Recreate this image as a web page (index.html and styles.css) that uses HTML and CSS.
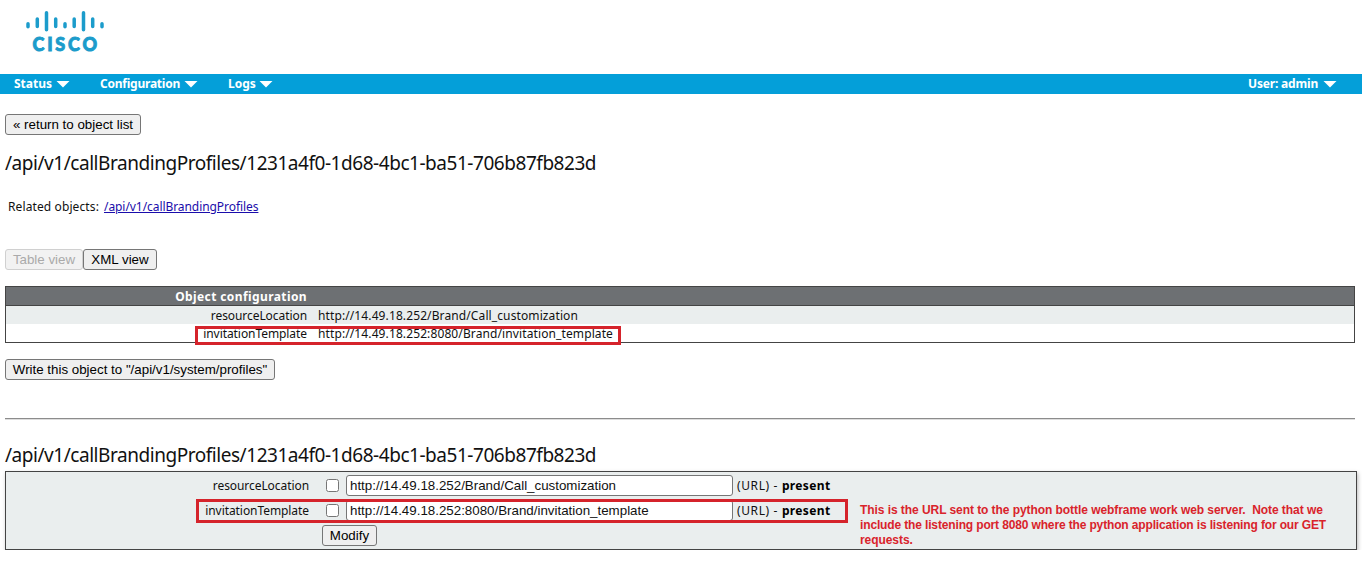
FILE: index.html
```html
<!DOCTYPE html>
<html lang="en">
<head>
<meta charset="utf-8">
<title>/api/v1/callBrandingProfiles</title>
<link rel="stylesheet" href="styles.css">
</head>
<body>
<header class="header">
  <svg class="logo" width="84" height="44" viewBox="24 10 84 44" role="img" aria-label="Cisco">
    <g stroke="#1c9ccb" stroke-width="3.5" stroke-linecap="round">
      <path d="M28 23.8v3M37.3 19v7.5M46.5 12.8v17M55.7 19v7.5M65 23.8v3M74.2 19v7.5M83.5 12.8v17M92.7 19v7.5M102 23.8v3"/>
    </g>
    <text class="logo-text" x="32.5" y="51" textLength="64.5" lengthAdjust="spacing">CISCO</text>
  </svg>
</header>
<nav class="nav">
  <a class="nav-item nav-status">Status<i class="caret"></i></a>
  <a class="nav-item nav-config">Configuration<i class="caret"></i></a>
  <a class="nav-item nav-logs">Logs<i class="caret"></i></a>
  <a class="nav-item nav-user">User: admin<i class="caret"></i></a>
</nav>
<main class="main">
  <button class="btn btn-return">« return to object list</button>
  <h1 class="title">/api/v1/callBrandingProfiles/1231a4f0-1d68-4bc1-ba51-706b87fb823d</h1>
  <p class="related"><span class="related-label">Related objects:</span><a class="link" href="#">/api/v1/callBrandingProfiles</a></p>
  <div class="views">
    <button class="btn btn-table" disabled>Table view</button>
    <button class="btn btn-xml">XML view</button>
  </div>
  <section class="config">
    <div class="config-head">Object configuration</div>
    <div class="config-row config-row-alt"><span class="name">resourceLocation</span><span class="value">http://14.49.18.252/Brand/Call_customization</span></div>
    <div class="config-row config-marked"><span class="name">invitationTemplate</span><span class="value">http://14.49.18.252:8080/Brand/invitation_template</span></div>
  </section>
  <button class="btn btn-write">Write this object to "/api/v1/system/profiles"</button>
  <hr class="rule">
  <h2 class="title title-form">/api/v1/callBrandingProfiles/1231a4f0-1d68-4bc1-ba51-706b87fb823d</h2>
  <form class="form">
    <div class="fields">
      <div class="field"><label class="name">resourceLocation</label><input class="check" type="checkbox"><input class="text" type="text" value="http://14.49.18.252/Brand/Call_customization"><span class="kind">(URL) -</span><b class="state">present</b></div>
      <div class="field field-marked"><label class="name">invitationTemplate</label><input class="check" type="checkbox"><input class="text" type="text" value="http://14.49.18.252:8080/Brand/invitation_template"><span class="kind">(URL) -</span><b class="state">present</b></div>
      <button class="btn btn-modify" type="button">Modify</button>
    </div>
    <p class="note">This is the URL sent to the python bottle webframe work web server.&nbsp; Note that we<br><span class="note-tight">include the listening port 8080 where the python application is listening for our GET</span><br>requests.</p>
  </form>
</main>
</body>
</html>
```
FILE: styles.css
```css
*, *::after { box-sizing: border-box; }
body { margin: 0; background: #fff; color: #111; font: 12px/16px "Noto Sans", sans-serif; overflow: hidden; }

.header { height: 74px; padding: 10px 24px; }
.logo { display: block; }
.logo-text { font: 900 18px Lato, sans-serif; fill: #1c9ccb; stroke: #1c9ccb; stroke-width: 0.9px; }

.nav { display: flex; align-items: center; height: 20px; padding: 0 26px 0 14px; background: #049fd9; color: #fff; font-weight: bold; }
.nav-item { display: flex; align-items: center; justify-content: space-between; }
.nav-status { width: 55px; }
.nav-config { width: 97px; margin-left: 31px; letter-spacing: -0.23px; }
.nav-logs { width: 44px; margin-left: 31px; }
.nav-user { width: 88px; margin-left: auto; letter-spacing: -0.18px; }
.caret { width: 14px; height: 7px; margin-right: -1px; background: #fff; clip-path: polygon(0 0, 100% 0, 50% 100%); }

.main { display: flex; flex-direction: column; align-items: flex-start; padding: 20px 5px 0; }
.btn { height: 21px; padding: 0; border: 1px solid #767676; border-radius: 3px; background: #efefef; color: #000; font: 13.333px/18px "Liberation Sans", sans-serif; white-space: nowrap; }
.btn:disabled { border-color: #d0d0d0; background: #f2f2f2; color: #aaa; }
.btn-return { width: 136px; }
.btn-table { width: 78px; }
.btn-xml { width: 74px; }
.btn-write { width: 270px; margin-top: 16px; }
.btn-modify { width: 55px; margin: 4px 0 0 316px; }

.title { margin: 16px 0 0; font-size: 19px; line-height: 24px; font-weight: normal; letter-spacing: -0.457px; white-space: nowrap; }
.title-form { margin-top: 23px; }
.related { display: flex; gap: 5px; margin: 24px 0 0 3px; }
.related-label { letter-spacing: 0.11px; }
.link { color: #1a0dab; letter-spacing: -0.065px; }
.views { display: flex; margin-top: 34px; }

.config { width: 1350px; height: 57px; margin-top: 16px; border: 1px solid #444; }
.config-head { height: 19px; padding-right: 1047px; border-bottom: 1px solid #444; background: #6d7073; color: #fff; font-weight: bold; line-height: 20px; text-align: right; letter-spacing: 0.4px; }
.config-row { position: relative; display: flex; gap: 11px; height: 18px; line-height: 20px; }
.config-row-alt { background: #eaeeee; }
.name { width: 301px; text-align: right; letter-spacing: -0.07px; }
.value { letter-spacing: 0.11px; }
.config-marked::after { content: ""; position: absolute; left: 189px; top: 2px; width: 426px; height: 19px; border: 3px solid #d5232b; }

.rule { width: 1350px; height: 2px; margin: 38px 0 0; border: 0; border-top: 1px solid #8c8c8c; border-bottom: 1px solid #ddd; }

.form { display: flex; align-items: flex-start; width: 1352px; height: 79px; margin-top: 4px; padding-top: 3px; border: 1px solid #444; background: #eaeeee; box-shadow: 1px 2px 4px #bbb; }
.fields { width: 841px; }
.field { position: relative; display: flex; align-items: center; height: 21px; }
.field + .field { margin-top: 4px; }
.field .name { width: 303px; }
.check { width: 13px; height: 13px; margin: 0 7px 0 17px; }
.text { width: 387px; height: 21px; padding: 0 3px; border: 1px solid #767676; border-radius: 3px; background: #fff; color: #111; font: 13.333px "Liberation Sans", sans-serif; }
.kind { margin-left: 4px; letter-spacing: 0.6px; }
.state { margin-left: 4px; color: #000; letter-spacing: 0.35px; }
.field-marked::after { content: ""; position: absolute; left: 190px; top: -1px; width: 652px; height: 24px; border: 3px solid #d5232b; }
.note { margin: 28px 0 0 13px; color: #d9232b; font: bold 12px/15px "Liberation Sans", sans-serif; letter-spacing: -0.063px; white-space: nowrap; }
.note-tight { letter-spacing: -0.142px; }
```
